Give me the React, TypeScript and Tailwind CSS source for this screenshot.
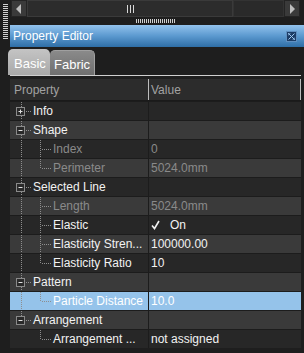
import React from 'react';

type Row = {
  kind: 'cat' | 'child';
  label: string;
  value?: React.ReactNode;
  open?: boolean;
  dim?: boolean;
  last?: boolean;
  lastCat?: boolean;
  tone: 'dark' | 'light' | 'sel';
};

const rows: Row[] = [
  { kind: 'cat', label: 'Info', open: false, tone: 'dark' },
  { kind: 'cat', label: 'Shape', open: true, tone: 'light' },
  { kind: 'child', label: 'Index', value: '0', dim: true, tone: 'dark' },
  { kind: 'child', label: 'Perimeter', value: '5024.0mm', dim: true, last: true, tone: 'light' },
  { kind: 'cat', label: 'Selected Line', open: true, tone: 'dark' },
  { kind: 'child', label: 'Length', value: '5024.0mm', dim: true, tone: 'light' },
  { kind: 'child', label: 'Elastic', value: 'check', tone: 'dark' },
  { kind: 'child', label: 'Elasticity Stren...', value: '100000.00', tone: 'light' },
  { kind: 'child', label: 'Elasticity Ratio', value: '10', last: true, tone: 'dark' },
  { kind: 'cat', label: 'Pattern', open: true, tone: 'light' },
  { kind: 'child', label: 'Particle Distance', value: '10.0', last: true, tone: 'sel' },
  { kind: 'cat', label: 'Arrangement', open: true, lastCat: true, tone: 'light' },
  { kind: 'child', label: 'Arrangement ...', value: 'not assigned', last: true, lastCat: true, tone: 'dark' },
];

const toneBg = {
  dark: 'bg-[#272727]',
  light: 'bg-[#3a3a3a]',
  sel: 'bg-[#95c3ea]',
};

function Gutter({ row }: { row: Row }) {
  const dot = '#8e8e8e';
  return (
    <svg width="43" height="19" className="shrink-0">
      {row.kind === 'cat' ? (
        <>
          <line x1="11.5" y1="0" x2="11.5" y2="5" stroke={dot} strokeDasharray="1 1" />
          {!row.lastCat && <line x1="11.5" y1="14" x2="11.5" y2="19" stroke={dot} strokeDasharray="1 1" />}
          <rect x="6.5" y="5.5" width="8" height="8" fill="#2a2a2a" stroke="#8a8a8a" />
          <line x1="8.5" y1="9.5" x2="12.5" y2="9.5" stroke="#e0e0e0" />
          {!row.open && <line x1="10.5" y1="7.5" x2="10.5" y2="11.5" stroke="#e0e0e0" />}
          <line x1="16" y1="9.5" x2="21" y2="9.5" stroke={dot} strokeDasharray="1 1" />
        </>
      ) : (
        <>
          {!row.lastCat && <line x1="11.5" y1="0" x2="11.5" y2="19" stroke={dot} strokeDasharray="1 1" />}
          <line x1="30.5" y1="0" x2="30.5" y2={row.last ? 10 : 19} stroke={dot} strokeDasharray="1 1" />
          <line x1="32" y1="9.5" x2="41" y2="9.5" stroke={dot} strokeDasharray="1 1" />
        </>
      )}
    </svg>
  );
}

function Grip({ dir }: { dir: 'h' | 'v' }) {
  const n = dir === 'h' ? 20 : 18;
  return (
    <div className={dir === 'h' ? 'flex gap-px' : 'flex flex-col gap-px'}>
      {Array.from({ length: n }).map((_, i) => (
        <div key={i} className={dir === 'h' ? 'w-px h-[4px] bg-[#d0d0d0]' : 'w-[5px] h-px bg-[#d0d0d0]'} />
      ))}
    </div>
  );
}

export default function App() {
  return (
    <div
      className="w-[304px] h-[353px] bg-[#1e1e1e] overflow-hidden flex text-[12px] leading-none"
      style={{ fontFamily: '"Liberation Sans", Arial, sans-serif' }}
    >
      {/* left dock gripper */}
      <div className="w-[10px] shrink-0 pt-[4px] pl-[3px]">
        <Grip dir="v" />
      </div>

      <div className="flex-1 flex flex-col">
        {/* scroll strip */}
        <div className="h-[17px] flex ml-px mr-[4px] bg-[#2a2a2a]">
          <div className="w-[16px] bg-[#3a3a3a] flex items-center justify-center border border-[#242424]">
            <svg width="6" height="10"><path d="M5 0 L0 5 L5 10 Z" fill="#bdbdbd" /></svg>
          </div>
          <div className="w-[206px] border border-[#3a3a3a] flex items-center justify-center bg-[#2c2c2c]">
            <div className="flex gap-[2px]">
              <div className="w-px h-[8px] bg-[#d8d8d8]" />
              <div className="w-px h-[8px] bg-[#d8d8d8]" />
              <div className="w-px h-[8px] bg-[#d8d8d8]" />
            </div>
          </div>
          <div className="flex-1 border border-[#333]" />
          <div className="w-[16px] bg-[#3a3a3a] flex items-center justify-center border border-[#242424]">
            <svg width="6" height="10"><path d="M1 0 L6 5 L1 10 Z" fill="#bdbdbd" /></svg>
          </div>
        </div>

        <div className="h-[8px] flex items-center pl-[126px]">
          <Grip dir="h" />
        </div>

        {/* title bar */}
        <div className="h-[22px] flex items-center justify-between pl-[3px] pr-[7px] bg-gradient-to-b from-[#92c2ec] via-[#5b99cf] to-[#2e6ea6] text-white text-[12px]">
          <span>Property Editor</span>
          <div className="w-[11px] h-[11px] bg-[#1c3d66] border border-[#5f8fc0] flex items-center justify-center">
            <svg width="7" height="7" viewBox="0 0 7 7">
              <path d="M0.5 0.5 L6.5 6.5 M6.5 0.5 L0.5 6.5" stroke="#9cc6ef" strokeWidth="1" />
              <path d="M0 0 H2.5 M0 0 V2.5 M7 7 H4.5 M7 7 V4.5" stroke="#9cc6ef" strokeWidth="1" />
            </svg>
          </div>
        </div>

        {/* tabs */}
        <div className="h-[28px] flex items-end -ml-[2px] pr-[3px] text-[13px]">
          <div className="h-[26px] w-[42px] rounded-t-[5px] bg-gradient-to-b from-[#c4c4c4] to-[#a9a9a9] text-white flex items-center pl-[6px] pt-[2px]">
            Basic
          </div>
          <div className="h-[25px] w-[45px] rounded-t-[5px] bg-gradient-to-b from-[#8a8a8a] to-[#6f6f6f] border-r border-t border-[#a0a0a0] text-white flex items-center pl-[4px] pt-[3px]">
            Fabric
          </div>
        </div>
        <div className="h-px mr-[3px] bg-[#cfcfcf]" />

        {/* grid */}
        <div className="mt-[3px] mr-[3px] flex flex-col">
          <div className="h-[22px] flex bg-[#2c2c2c] text-[#a2a2a2] border-b border-[#1a1a1a]">
            <div className="w-[139px] flex items-center pl-[4px] border-r border-[#bdbdbd]">Property</div>
            <div className="flex-1 flex items-center pl-[2px] border-r border-[#bdbdbd]">Value</div>
          </div>
          {rows.map((r, i) => {
            const text = r.tone === 'sel' ? 'text-white' : r.dim ? 'text-[#8a8a8a]' : 'text-[#f2f2f2]';
            return (
              <div key={i} className={`h-[19px] flex ${toneBg[r.tone]} ${text} border-t border-[#1c1c1c]`}>
                <div className="w-[139px] flex items-center border-r border-[#1c1c1c] overflow-hidden">
                  <Gutter row={r} />
                  <span className={`whitespace-nowrap ${r.kind === 'cat' ? '-ml-[20px]' : ''}`}>{r.label}</span>
                </div>
                <div className="flex-1 flex items-center pl-[2px] whitespace-nowrap">
                  {r.value === 'check' ? (
                    <>
                      <svg width="19" height="10" viewBox="0 0 19 10" className="shrink-0">
                        <path d="M1 5.5 L3.5 8.5 L8 1" stroke="#f2f2f2" strokeWidth="1.6" fill="none" />
                      </svg>
                      <span>On</span>
                    </>
                  ) : (
                    r.value
                  )}
                </div>
              </div>
            );
          })}
        </div>
      </div>
    </div>
  );
}
